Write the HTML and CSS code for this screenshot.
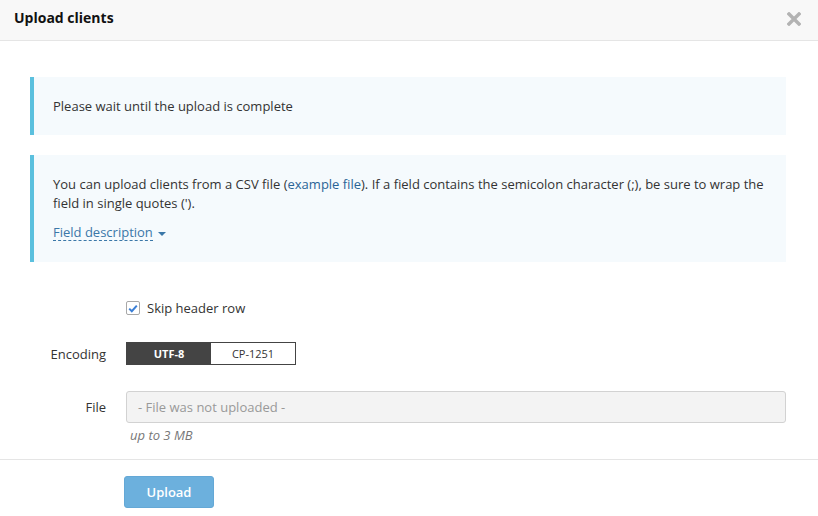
FILE: index.html
```html
<!DOCTYPE html>
<html>
<head>
<meta charset="utf-8">
<link rel="stylesheet" href="styles.css">
</head>
<body>
<div class="modal">
  <div class="modal-header">
    <h3 class="modal-title">Upload clients</h3>
    <span class="close" aria-label="Close">
      <svg width="14" height="14" viewBox="0 0 14 14"><path d="M2 2 L12 12 M12 2 L2 12" stroke="#b3b3b3" stroke-width="3.4" stroke-linecap="square"/></svg>
    </span>
  </div>
  <div class="modal-body">
    <div class="alert alert-short">Please wait until the upload is complete</div>
    <div class="alert alert-info">
      <p class="alert-text">You can upload clients from a CSV file (<a class="link" href="#">example file</a>). If a field contains the semicolon character (;), be sure to wrap the field in single quotes (').</p>
      <div class="field-desc"><span class="dashed">Field description</span><span class="caret"></span></div>
    </div>
    <div class="form">
      <div class="row row-check">
        <div class="label"></div>
        <label class="check">
          <span class="box">
            <svg width="10" height="9" viewBox="0 0 10 9"><path d="M1.2 4.6 L3.8 7.2 L8.8 1.6" fill="none" stroke="#3b7fd6" stroke-width="2"/></svg>
          </span>
          Skip header row
        </label>
      </div>
      <div class="row row-enc">
        <div class="label">Encoding</div>
        <div class="toggle">
          <span class="opt opt-active">UTF-8</span>
          <span class="opt">CP-1251</span>
        </div>
      </div>
      <div class="row row-file">
        <div class="label">File</div>
        <div class="file-col">
          <div class="file-input">- File was not uploaded -</div>
          <div class="help">up to 3 MB</div>
        </div>
      </div>
    </div>
  </div>
  <div class="modal-footer">
    <button class="btn">Upload</button>
  </div>
</div>
</body>
</html>
```
FILE: styles.css
```css
* { box-sizing: border-box; }
html, body { margin: 0; padding: 0; background: #fff; }
body {
  font-family: "Open Sans", "Liberation Sans", Arial, sans-serif;
  font-size: 13px;
  color: #333;
  width: 818px;
  height: 516px;
  overflow: hidden;
}
.modal-header {
  height: 41px;
  background: #f8f8f8;
  border-bottom: 1px solid #e5e5e5;
  display: flex;
  align-items: center;
  justify-content: space-between;
  padding: 0 17px 0 14px;
}
.modal-title {
  margin: 0;
  font-size: 14px;
  font-weight: 700;
  color: #111;
  line-height: 20px;
  margin-top: -5px;
}
.close { display: flex; margin-top: -3px; }
.modal-body {
  padding: 36px 32px 0 30px;
}
.alert {
  background: #f5fafd;
  border-left: 4px solid #5bc0de;
  padding: 20px 20px 20px 19px;
  line-height: 18px;
  margin-bottom: 20px;
}
.alert-info { padding-bottom: 21px; }
.alert-text { margin: 0; line-height: 19px; }
.link { color: #2a6496; text-decoration: none; }
.field-desc {
  margin-top: 11px;
  line-height: 18px;
  color: #3a77a8;
  display: flex;
  align-items: center;
}
.dashed {
  border-bottom: 1px dashed #3a77a8;
  line-height: 16px;
}
.caret {
  display: inline-block;
  width: 0; height: 0;
  border-left: 4px solid transparent;
  border-right: 4px solid transparent;
  border-top: 4px solid #3a77a8;
  margin-left: 5px;
  margin-top: 2px;
}
.form { margin-top: 37px; }
.row { display: flex; align-items: center; }
.label {
  width: 76px;
  text-align: right;
  margin-right: 20px;
  color: #333;
}
.check { display: flex; align-items: center; color: #333; }
.box {
  width: 14px; height: 14px;
  border: 1px solid #a8a8a8;
  border-radius: 2px;
  background: #fff;
  display: flex; align-items: center; justify-content: center;
  margin-right: 7px;
}
.row-enc { margin-top: 25px; }
.toggle {
  display: flex;
  height: 23px;
  border: 1px solid #444;
}
.opt {
  font-size: 11px;
  display: flex; align-items: center; justify-content: center;
  color: #333;
  background: #fff;
  width: 84px;
}
.opt-active {
  background: #444;
  color: #fff;
  font-weight: 700;
}
.row-file { margin-top: 26px; align-items: flex-start; }
.row-file .label { line-height: 32px; }
.file-col { flex: 1; }
.file-input {
  height: 32px;
  border: 1px solid #d2d2d2;
  border-radius: 3px;
  background: #f3f3f3;
  color: #999;
  padding: 0 11px;
  line-height: 30px;
}
.help {
  font-style: italic;
  color: #777;
  font-size: 13px;
  margin-top: 3px;
  padding-left: 4px;
  line-height: 18px;
}
.modal-footer {
  margin-top: 15px;
  border-top: 1px solid #e5e5e5;
  padding: 16px 0 0 124px;
}
.btn {
  width: 90px;
  height: 32px;
  background: #6cb0dd;
  border: 1px solid #64a8d6;
  border-radius: 3px;
  color: #fff;
  font-family: "Open Sans", "Liberation Sans", sans-serif;
  font-size: 13px;
  font-weight: 600;
  padding: 0;
}
```
